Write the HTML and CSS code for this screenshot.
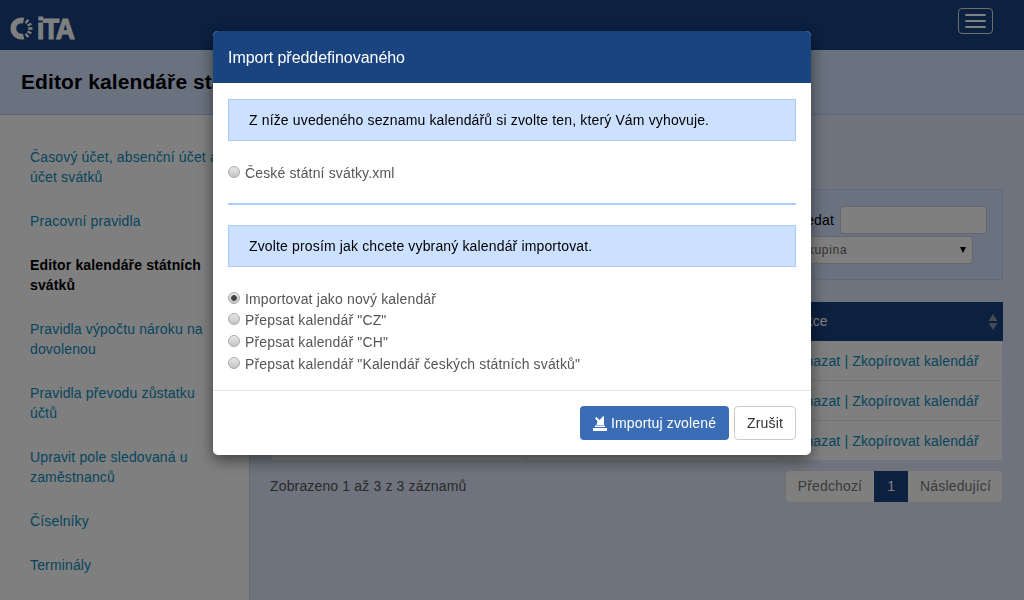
FILE: index.html
```html
<!DOCTYPE html>
<html lang="cs">
<head>
    <meta charset="UTF-8">
    <meta name="viewport" content="width=device-width, initial-scale=1.0">
    <title>Editor kalendáře státních svátků</title>
    <link rel="stylesheet" href="styles.css">
</head>
<body>

<div class="navbar">
    <div class="logo">
        <svg width="23" height="23" viewBox="0 0 24 24">
            <path d="M14.200 3.800A8.500 8.500 0 1 0 14.200 20.200" fill="none" stroke="#fff" stroke-width="6"/>
            <path d="M16.300 6.500L19.100 2.900M18.300 8.900L22.300 7M19 12H23.500M18.300 15.100L22.300 17M16.300 17.500L19.100 21.100" fill="none" stroke="#fff" stroke-width="2.400"/>
        </svg>
        <span class="logo-text">iTA</span>
    </div>
    <button class="menu-toggle"><span></span><span></span><span></span></button>
</div>

<div class="page-title">
    <h1>Editor kalendáře státních svátků</h1>
</div>

<div class="layout">
    <ul class="sidebar">
        <li><a href="#">Časový účet, absenční účet a účet svátků</a></li>
        <li><a href="#">Pracovní pravidla</a></li>
        <li><a href="#" class="current">Editor kalendáře státních svátků</a></li>
        <li><a href="#">Pravidla výpočtu nároku na dovolenou</a></li>
        <li><a href="#">Pravidla převodu zůstatku účtů</a></li>
        <li><a href="#">Upravit pole sledovaná u zaměstnanců</a></li>
        <li><a href="#">Číselníky</a></li>
        <li><a href="#">Terminály</a></li>
    </ul>

    <div class="content">
        <div class="filter">
            <div class="filter-row">
                <label>Hledat</label>
                <input type="text" class="filter-input">
            </div>
            <div class="filter-select">Skupina<span class="select-arrow"></span></div>
        </div>

        <div class="table">
            <div class="table-head">
                <div></div>
                <div></div>
                <div class="cell head-cell">
                    <span>Akce</span>
                    <svg width="10" height="16" viewBox="0 0 10 16"><path d="M5 0l4.500 7h-9zM5 16l-4.500-7h9z" fill="#8f97a4"/></svg>
                </div>
            </div>
            <div class="table-row"><div class="cell"></div><div class="cell"></div><div class="cell"><a href="#">Smazat | Zkopírovat kalendář</a></div></div>
            <div class="table-row"><div class="cell"></div><div class="cell"></div><div class="cell"><a href="#">Smazat | Zkopírovat kalendář</a></div></div>
            <div class="table-row"><div class="cell"></div><div class="cell"></div><div class="cell"><a href="#">Smazat | Zkopírovat kalendář</a></div></div>
        </div>

        <div class="table-foot">
            <span class="table-info">Zobrazeno 1 až 3 z 3 záznamů</span>
            <div class="pagination">
                <a href="#">Předchozí</a>
                <a href="#" class="active">1</a>
                <a href="#">Následující</a>
            </div>
        </div>
    </div>
</div>

<div class="backdrop"></div>

<div class="modal">
    <div class="modal-header">Import předdefinovaného</div>
    <div class="modal-body">
        <div class="notice">Z níže uvedeného seznamu kalendářů si zvolte ten, který Vám vyhovuje.</div>
        <div class="radio-list first-list">
            <label><input type="radio" name="soubor"> České státní svátky.xml</label>
        </div>
        <hr class="divider">
        <div class="notice">Zvolte prosím jak chcete vybraný kalendář importovat.</div>
        <div class="radio-list">
            <label><input type="radio" name="akce" checked> Importovat jako nový kalendář</label>
            <label><input type="radio" name="akce"> Přepsat kalendář "CZ"</label>
            <label><input type="radio" name="akce"> Přepsat kalendář "CH"</label>
            <label><input type="radio" name="akce"> Přepsat kalendář "Kalendář českých státních svátků"</label>
        </div>
    </div>
    <div class="modal-footer">
        <button class="btn btn-primary">
            <svg width="14" height="15" viewBox="0 0 14 15"><path d="M0 12h14v3H0zM2 9.500h10V11H2zM3.500 9l1-4L2 2.500 3.500 1l3 3L9 1.500 10 0l1 1v8z" fill="#fff"/></svg>
            Importuj zvolené
        </button>
        <button class="btn btn-default">Zrušit</button>
    </div>
</div>

</body>
</html>
```

FILE: styles.css
```css
* {
    box-sizing: border-box;
}
body {
    margin: 0;
    height: 600px;
    overflow: hidden;
    font-family: "Liberation Sans", Arial, sans-serif;
    font-size: 14px;
    line-height: 20px;
    letter-spacing: 0.15px;
    color: #333;
    background-color: #dce6fa;
}
a {
    color: #0a8cbc;
    text-decoration: none;
}

.navbar {
    height: 50px;
    background-color: #18407f;
    display: flex;
    justify-content: space-between;
    align-items: flex-start;
    padding: 0 10px;
}
.logo {
    display: flex;
    align-items: center;
    gap: 4px;
    margin-top: 17px;
}
.logo-text {
    font-size: 30px;
    line-height: 23px;
    font-weight: bold;
    color: #fff;
    letter-spacing: -1.500px;
    -webkit-text-stroke: 1.200px #fff;
    transform: scaleX(0.88);
    transform-origin: left center;
}
.menu-toggle {
    width: 35px;
    height: 26px;
    margin: 8px 21px 0 0;
    padding: 0 6px;
    background: none;
    border: 1px solid #ddd;
    border-radius: 4px;
    display: flex;
    flex-direction: column;
    justify-content: center;
    gap: 4px;
}
.menu-toggle span {
    display: block;
    height: 2px;
    background-color: #fff;
    border-radius: 1px;
}

.page-title {
    height: 65px;
    padding: 0 21px;
    display: flex;
    align-items: center;
    background-color: #d5e4ff;
    border-bottom: 1px solid #b4cdf5;
}
.page-title h1 {
    margin: 0 0 1px;
    font-size: 21px;
    letter-spacing: 0.1px;
    color: #000;
}

.layout {
    display: flex;
    height: 485px;
}
.sidebar {
    width: 250px;
    margin: 0;
    padding: 32px 27px 0 30px;
    list-style: none;
    background-color: #fff;
    border-right: 1px solid #c8d6f0;
}
.sidebar li {
    margin-bottom: 24px;
}
.current {
    color: #000;
    font-weight: bold;
}

.content {
    flex: 1;
    padding: 74px 21px 0 20px;
}
.filter {
    height: 91px;
    margin-left: 2px;
    padding: 16px 15px 0;
    background-color: #d5e4ff;
    border: 1px solid #c2d5f5;
    display: flex;
    flex-direction: column;
    align-items: flex-end;
    gap: 2px;
}
.filter-row {
    display: flex;
    align-items: center;
    gap: 6px;
}
.filter-row label {
    color: #000;
}
.filter-input {
    width: 147px;
    height: 28px;
    background-color: #fff;
    border: 1px solid #ccd;
    border-radius: 3px;
}
.filter-select {
    width: 185px;
    height: 28px;
    margin-right: 14px;
    padding: 0 6px 0 10px;
    font-size: 12px;
    line-height: 28px;
    letter-spacing: 0.7px;
    color: #666;
    background-color: #fff;
    border: 1px solid #ccd;
    border-radius: 3px;
    display: flex;
    justify-content: space-between;
    align-items: center;
}
.select-arrow {
    width: 0;
    height: 0;
    border-left: 3px solid transparent;
    border-right: 3px solid transparent;
    border-top: 6px solid #000;
}

.table {
    margin: 22px 0 0 2px;
}
.table-head,
.table-row {
    display: grid;
    grid-template-columns: 255px 255px 1fr;
}
.table-head {
    height: 39px;
    color: #fff;
    background-color: #18407f;
}
.table-row {
    height: 40px;
    background-color: #fff;
    border-bottom: 1px solid #dde6f8;
}
.cell {
    padding: 0 10px;
    line-height: 41px;
    border-right: 1px solid #dde6f8;
    white-space: nowrap;
}
.head-cell {
    padding: 0 5px 0 14px;
    line-height: 39px;
    border-right: 0;
    display: flex;
    justify-content: space-between;
    align-items: center;
}

.table-foot {
    margin-top: 9px;
    display: flex;
    justify-content: space-between;
    align-items: flex-start;
}
.table-info {
    margin-top: 6px;
    color: #555;
}
.pagination {
    display: flex;
    background-color: #fff;
    border-radius: 4px;
    height: 33px;
    line-height: 31px;
    border: 1px solid #e4e4e4;
}
.pagination a {
    padding: 0 12px;
    color: #777;
}
.pagination a:last-child {
    padding-right: 11px;
}
.pagination .active {
    width: 34px;
    padding: 0;
    text-align: center;
    color: #fff;
    background-color: #18407f;
}

.backdrop {
    position: fixed;
    inset: 0;
    background-color: rgba(0, 0, 0, 0.5);
}

.modal {
    position: fixed;
    left: 213px;
    top: 31px;
    width: 598px;
    background-color: #fff;
    border-radius: 5px;
    overflow: hidden;
    box-shadow: 0 5px 15px rgba(0, 0, 0, 0.5);
}
.modal-header {
    height: 52px;
    padding: 0 15px;
    font-size: 16px;
    line-height: 54px;
    letter-spacing: -0.04px;
    color: #fff;
    background-color: #1a4480;
}
.modal-body {
    padding: 16px 15px 0;
}
.notice {
    height: 42px;
    padding: 0 20px;
    line-height: 41px;
    color: #000;
    background-color: #cce0ff;
    border: 1px solid #aaccff;
}
.radio-list {
    padding: 21px 0 16px;
    color: #555;
}
.radio-list label {
    display: flex;
    align-items: center;
    gap: 5px;
    height: 21.700px;
}
.radio-list input {
    appearance: none;
    width: 12px;
    height: 12px;
    margin: 0 0 2px;
    border: 1px solid #aaa;
    border-radius: 50%;
    background: linear-gradient(#e8e8e8, #c4c4c4);
}
.radio-list input:checked {
    background: radial-gradient(circle, #444 0, #444 2.500px, transparent 3.200px), linear-gradient(#e8e8e8, #c4c4c4);
}
.first-list {
    padding-bottom: 19px;
}
.divider {
    height: 2px;
    margin: 0 0 20px;
    background-color: #aaccff;
    border: 0;
}
.modal-footer {
    height: 65px;
    padding: 15px;
    display: flex;
    justify-content: flex-end;
    gap: 5px;
    border-top: 1px solid #e5e5e5;
}
.btn {
    height: 34px;
    padding: 0 12px;
    font-family: inherit;
    font-size: 14px;
    letter-spacing: 0.15px;
    border-radius: 4px;
    border: 1px solid transparent;
}
.btn-primary {
    color: #fff;
    background-color: #3a6db5;
    display: flex;
    align-items: center;
    gap: 4px;
}
.btn-default {
    color: #333;
    background-color: #fff;
    border-color: #ccc;
}
```
